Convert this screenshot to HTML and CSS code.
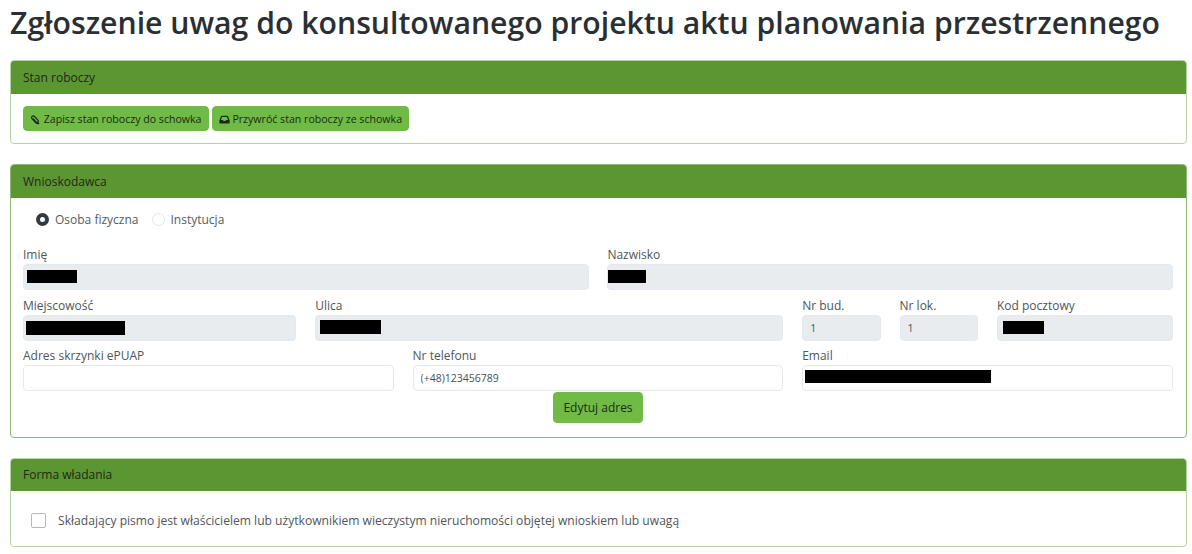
FILE: index.html
```html
<!DOCTYPE html>
<html lang="pl">
<head>
    <meta charset="UTF-8">
    <title>Zgłoszenie uwag</title>
    <link rel="stylesheet" href="styles.css">
</head>
<body>
    <h1>Zgłoszenie uwag do konsultowanego projektu aktu planowania przestrzennego</h1>

    <div class="card card-draft">
        <div class="card-header">Stan roboczy</div>
        <div class="card-body">
            <button class="btn btn-sm">
                <svg class="icon" viewBox="0 0 16 16"><path d="M4.2 6.6l4.6 4.9c.8.8 2 .8 2.7.1s.7-1.8-.1-2.6L6.6 3.7C5.5 2.6 4 2.6 3 3.5s-1 2.5.1 3.6l5.4 5.6c1.5 1.5 3.5 1.6 4.8.4" fill="none" stroke="currentColor" stroke-width="1.8"/></svg>
                Zapisz stan roboczy do schowka
            </button>
            <button class="btn btn-sm">
                <svg class="icon" viewBox="0 0 16 16"><path d="M4 2.5h8c.5 0 .9.3 1.1.7L15.5 9v3.5c0 .8-.6 1.4-1.4 1.4H1.9c-.8 0-1.4-.6-1.4-1.4V9l2.4-5.8c.2-.4.6-.7 1.1-.7zm.4 1.9L2.7 8.6h3l.9 1.7h2.8l.9-1.7h3l-1.7-4.2z" fill="currentColor" fill-rule="evenodd"/></svg>
                Przywróć stan roboczy ze schowka
            </button>
        </div>
    </div>

    <div class="card card-applicant">
        <div class="card-header">Wnioskodawca</div>
        <div class="card-body">
            <div class="radios">
                <label class="radio"><span class="radio-mark checked"></span>Osoba fizyczna</label>
                <label class="radio"><span class="radio-mark"></span>Instytucja</label>
            </div>
            <div class="form-grid">
                <div class="field col-6">
                    <label>Imię</label>
                    <div class="control"><input class="input" disabled><span class="redact r-name"></span></div>
                </div>
                <div class="field col-6">
                    <label>Nazwisko</label>
                    <div class="control"><input class="input" disabled><span class="redact r-surname"></span></div>
                </div>
                <div class="field col-3">
                    <label>Miejscowość</label>
                    <div class="control"><input class="input" disabled><span class="redact r-city"></span></div>
                </div>
                <div class="field col-5">
                    <label>Ulica</label>
                    <div class="control"><input class="input" disabled><span class="redact r-street"></span></div>
                </div>
                <div class="field col-1">
                    <label>Nr bud.</label>
                    <div class="control"><input class="input" disabled value="1"></div>
                </div>
                <div class="field col-1">
                    <label>Nr lok.</label>
                    <div class="control"><input class="input" disabled value="1"></div>
                </div>
                <div class="field col-2">
                    <label>Kod pocztowy</label>
                    <div class="control"><input class="input" disabled><span class="redact r-zip"></span></div>
                </div>
                <div class="field col-4">
                    <label>Adres skrzynki ePUAP</label>
                    <div class="control"><input class="input"></div>
                </div>
                <div class="field col-4">
                    <label>Nr telefonu</label>
                    <div class="control"><input class="input" value="(+48)123456789"></div>
                </div>
                <div class="field col-4">
                    <label>Email</label>
                    <div class="control"><input class="input"><span class="redact r-email"></span></div>
                </div>
            </div>
            <div class="form-actions">
                <button class="btn">Edytuj adres</button>
            </div>
        </div>
    </div>

    <div class="card card-ownership">
        <div class="card-header">Forma władania</div>
        <div class="card-body">
            <label class="check"><span class="check-mark"></span>Składający pismo jest właścicielem lub użytkownikiem wieczystym nieruchomości objętej wnioskiem lub uwagą</label>
        </div>
    </div>
</body>
</html>
```

FILE: styles.css
```css
* {
    box-sizing: border-box;
    margin: 0;
    padding: 0;
}

body {
    font-family: "Open Sans", "Noto Sans", sans-serif;
    font-size: 12px;
    color: #212529;
    background: #fff;
    padding: 5px 5px 0 10px;
    overflow: hidden;
}

h1 {
    font-size: 30.2px;
    font-weight: 600;
    line-height: 36px;
    color: #2a2f33;
    white-space: nowrap;
    margin-bottom: 19px;
}

.card {
    border: 1px solid #b7d5a3;
    border-radius: 4px;
    margin-bottom: 20px;
    overflow: hidden;
}

.card-applicant {
    border-color: #8db974;
}

.card-header {
    background: #5c9632;
    height: 33px;
    line-height: 33px;
    padding: 0 12px;
    color: #1d2a14;
}

.card-body {
    padding: 12px 13px 12px 12px;
}

.card-draft .card-body {
    height: 49px;
}

.card-applicant .card-body {
    height: 239px;
    padding-top: 11px;
}

.card-ownership {
    height: 89px;
}

.card-ownership .card-header {
    height: 32px;
    line-height: 32px;
}

.btn {
    font-family: inherit;
    font-size: 12px;
    color: #1d2a14;
    background: #6fbb45;
    border: 1px solid #6fbb45;
    border-radius: 4px;
    height: 31px;
    padding: 0 9px;
}

.btn-sm {
    font-size: 10.6px;
    height: 25px;
    padding: 0 6px;
}

.icon {
    width: 11px;
    height: 11px;
    vertical-align: -2px;
}

.radios {
    display: flex;
    gap: 13px;
    padding-left: 13px;
    height: 20px;
    align-items: center;
    color: #555b60;
    margin-bottom: 17px;
}

.radio {
    display: flex;
    align-items: center;
    gap: 6px;
}

.radio-mark {
    width: 13px;
    height: 13px;
    border-radius: 50%;
    border: 1px solid #e2e5e8;
    background: #fff;
}

.radio-mark.checked {
    border: 4px solid #343a40;
}

.form-grid {
    display: grid;
    grid-template-columns: repeat(12, 1fr);
    column-gap: 18.75px;
    row-gap: 6.5px;
}

.col-1 { grid-column: span 1; }
.col-2 { grid-column: span 2; }
.col-3 { grid-column: span 3; }
.col-4 { grid-column: span 4; }
.col-5 { grid-column: span 5; }
.col-6 { grid-column: span 6; }

.field label {
    display: block;
    line-height: 18px;
    color: #4f555a;
}

.control {
    position: relative;
}

.input {
    display: block;
    width: 100%;
    height: 26px;
    font-family: inherit;
    font-size: 10.5px;
    color: #495057;
    background: #fff;
    border: 1px solid #e6e9ec;
    border-radius: 4px;
    padding: 0 7px;
}

.input:disabled {
    background: #e9ecef;
}

.redact {
    position: absolute;
    background: #000;
    height: 13px;
    top: 6px;
}

.r-name { left: 4px; width: 50px; }
.r-surname { left: 1px; width: 38px; }
.r-city { left: 3px; width: 99px; height: 14px; }
.r-street { left: 5px; width: 61px; height: 14px; top: 5px; }
.r-zip { left: 6px; width: 41px; }
.r-email { left: 3px; width: 186px; top: 5px; }

.form-actions {
    text-align: center;
    margin-top: 1px;
}

.check {
    display: flex;
    align-items: center;
    gap: 12px;
    padding: 9px 0 0 8px;
    color: #4f555a;
    font-size: 12.1px;
}

.check-mark {
    width: 15px;
    height: 15px;
    border: 1px solid #b5b9bd;
    border-radius: 2px;
    background: #fff;
}
```
